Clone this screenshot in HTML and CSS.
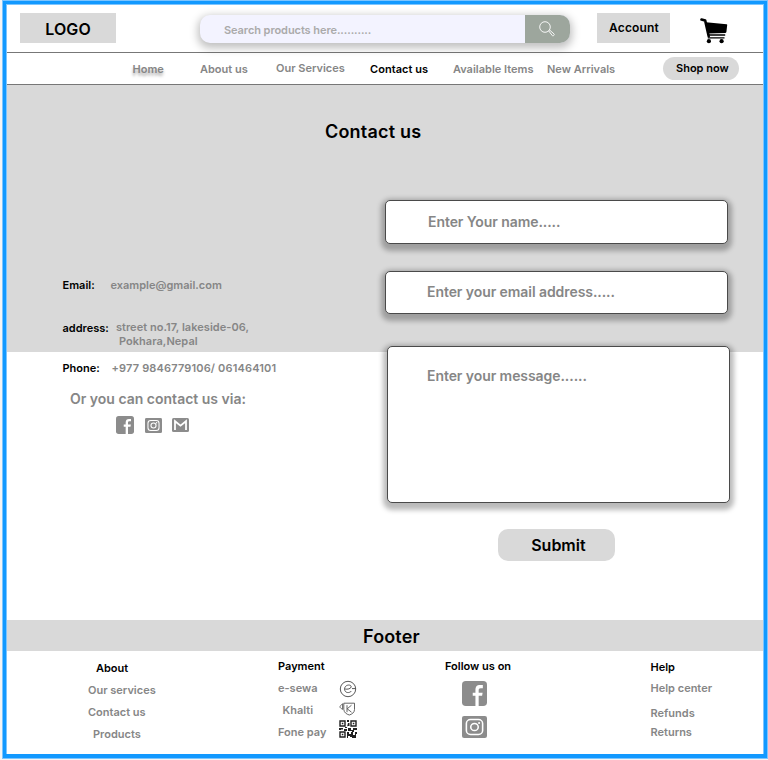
FILE: index.html
```html
<!DOCTYPE html>
<html lang="en">
<head>
<meta charset="utf-8">
<title>Contact us</title>
<link rel="stylesheet" href="styles.css">
</head>
<body>
<svg class="defs" aria-hidden="true">
  <symbol id="facebook" viewBox="0 0 24 24">
    <rect width="24" height="24" rx="3.6" fill="#8c8c8c"/>
    <path d="M12.9 24V14.2H10.3V11.2H12.9V8.6C12.9 5.2 14.6 3.9 17.2 3.9H20V7H18C16.4 7 16 7.7 16 9V11.2H19.8L19.3 14.2H16V24Z" fill="#fff"/>
  </symbol>
  <symbol id="instagram" viewBox="0 0 24 22" preserveAspectRatio="none">
    <rect width="24" height="22" rx="2" fill="#8c8c8c"/>
    <rect x="4.2" y="3.6" width="15.6" height="14.8" rx="4" fill="none" stroke="#fff" stroke-width="1.5"/>
    <circle cx="12" cy="11" r="3.6" fill="none" stroke="#fff" stroke-width="1.5"/>
    <circle cx="16.4" cy="6.9" r="1" fill="#fff"/>
  </symbol>
</svg>
<div class="frame">
  <div class="page">
    <header class="top">
      <div class="logo">LOGO</div>
      <div class="search">
        <span class="search-text">Search products here..........</span>
        <span class="search-btn">
          <svg width="18" height="18" viewBox="0 0 18 18" fill="none" stroke="#fff" stroke-width=".9"><circle cx="7" cy="7" r="5.3"/><path d="M10.7 10.9l.9-.9 4.4 3.9c.9.9-.8 2.6-1.7 1.7z"/></svg>
        </span>
      </div>
      <div class="account">Account</div>
      <svg class="cart" width="28" height="28" viewBox="0 0 28 28"><path d="M1.5 2.5L5.2 3.6L8.7 19.2" fill="none" stroke="#000" stroke-width="2.6" stroke-linecap="round" stroke-linejoin="round"/><path d="M6 5.2L26.6 7.2Q27.3 7.3 27.2 8L26.4 15Q26.3 15.8 25.4 15.9L8.2 16.6Z"/><path d="M8 18H25.2M7.8 20.8H24.5" fill="none" stroke="#000" stroke-width="1.3"/><circle cx="8.9" cy="24.2" r="2.1"/><circle cx="21.6" cy="24.2" r="2.1"/></svg>
    </header>
    <nav class="nav">
      <a class="home">Home</a>
      <a>About us</a>
      <a class="services">Our Services</a>
      <a class="current">Contact us</a>
      <a>Available Items</a>
      <a>New Arrivals</a>
      <a class="shop">Shop now</a>
    </nav>
    <main class="main">
      <h1>Contact us</h1>
      <div class="columns">
        <section class="info">
          <dl>
            <dt>Email:</dt><dd class="email">example@gmail.com</dd>
            <dt>address:</dt><dd class="address">street no.17, lakeside-06,<br><span class="city">Pokhara,Nepal</span></dd>
            <dt>Phone:</dt><dd class="phone">+977 9846779106/ 061464101</dd>
          </dl>
          <p class="via">Or you can contact us via:</p>
          <div class="social">
            <svg width="18" height="18"><use href="#facebook"/></svg>
            <svg width="17" height="15"><use href="#instagram"/></svg>
            <svg width="17" height="14" viewBox="0 0 17 14"><rect width="17" height="14" rx="1.5" fill="#8c8c8c"/><path d="M3 12V3.2L8.5 7.6L14 3.2V12" fill="none" stroke="#fff" stroke-width="1.8"/></svg>
          </div>
        </section>
        <form class="form">
          <div class="field name">Enter Your name.....</div>
          <div class="field mail">Enter your email address.....</div>
          <div class="field message">Enter your message......</div>
          <div class="submit">Submit</div>
        </form>
      </div>
    </main>
    <footer>
      <h2>Footer</h2>
      <div class="links">
        <ul class="about"><li class="title">About</li><li>Our services</li><li>Contact us</li><li class="products">Products</li></ul>
        <ul class="payment">
          <li class="title">Payment</li>
          <li>e-sewa</li>
          <li class="khalti">Khalti</li>
          <li>Fone pay</li>
        </ul>
        <div class="pay-icons">
          <svg width="18" height="18" viewBox="0 0 18 18" fill="none" stroke="#444" stroke-width=".9"><circle cx="9" cy="9" r="7.7"/><path d="M13 8.6H16.4M6.2 9C8 9.6 12.2 8.8 12.2 6.8C12.2 4 5.6 4.4 5.6 9C5.6 13.4 10.8 13.3 12.4 11"/></svg>
          <svg width="18" height="14" viewBox="0 0 18 14" fill="none" stroke="#555" stroke-width=".9"><path d="M4.8 1.2H15.5V7.5C15.5 10.5 13 12.2 10.3 13C7.5 12.2 5 10.5 4.8 7.5ZM8 3.2V10.2M12.5 3.2L8.2 6.8L12.5 10.2M3.6 1.8C2 3 1 4 1 4.8C1 6 2.2 6.4 3.6 7.4V1.8"/></svg>
          <svg width="18" height="18" viewBox="0 0 18 18"><path d="M1 1h5v5H1zM12 1h5v5H12zM1 12h5v5H1z" fill="none" stroke="#222" stroke-width="1.4"/><path d="M2.8 2.8h1.5v1.5H2.8zM13.8 2.8h1.5v1.5h-1.5zM2.8 13.8h1.5v1.5H2.8zM8 0h2v2H8zM9 3h1.5v3H8v2H6V7H8zM0 8h4v1.5H2V10H0zM5 9h3v2H5zM9 8h3v2h2V8h4v2h-3v2h-2v-1H9zM8 12h2v2h2v2H9v2H8zM12 12h2v3h2v-3h2v2h-1v4h-4v-1h-2v-1h1z" fill="#222"/></svg>
        </div>
        <div class="follow">
          <div class="title">Follow us on</div>
          <svg width="25" height="25"><use href="#facebook"/></svg>
          <svg class="insta" width="25" height="22"><use href="#instagram"/></svg>
        </div>
        <ul class="help"><li class="title">Help</li><li>Help center</li><li class="refunds">Refunds</li><li class="returns">Returns</li></ul>
      </div>
    </footer>
  </div>
</div>
</body>
</html>
```

FILE: styles.css
```css
* { box-sizing: border-box; margin: 0; padding: 0; }
body {
  height: 760px;
  padding: 1px 1px 2px 3px;
  overflow: hidden;
  background: #f5f5f5;
  font-family: Inter, "Liberation Sans", sans-serif;
  font-size: 11px;
  font-weight: 600;
  line-height: 14px;
  color: #868686;
  white-space: nowrap;
}
.defs { position: absolute; width: 0; height: 0; }
svg { display: block; flex: none; }
ul { list-style: none; }
.frame {
  height: 757px;
  border: 3px solid #1299ff;
  border-bottom-width: 4px;
  box-shadow: 0 0 0 1px #7cc5ff;
  background: #7cc5ff;
  padding: 1px 1px 0;
}
.page { height: 749px; background: #fff; }

.top { display: flex; height: 48px; padding-left: 13px; border-bottom: 1px solid #777; }
.logo, .account { background: #d9d9d9; color: #000; text-align: center; }
.logo { width: 96px; height: 30px; margin-top: 8.4px; line-height: 33px; font-size: 16px; letter-spacing: .1px; }
.search {
  display: flex;
  width: 370px;
  height: 28px;
  margin: 10.4px 0 0 83.6px;
  border-radius: 10px;
  background: #f3f3ff;
  box-shadow: 0 3px 9px 2px rgba(0, 0, 0, .25);
  overflow: hidden;
}
.search-text { flex: 1; padding-left: 24.4px; line-height: 30px; color: #aaa; letter-spacing: -.07px; }
.search-btn { width: 44.5px; padding: 5px 0 0 13px; background: #9da69d; }
.account { width: 73px; height: 30px; margin: 8px 0 0 27.4px; padding-left: 1px; line-height: 29px; font-size: 12px; letter-spacing: .15px; }
.cart { margin: 12px 0 0 30.5px; }

.nav {
  display: grid;
  grid-template-columns: 67.5px 76px 94px 83px 94px 116px 75.5px;
  height: 32px;
  padding: 9px 0 0 125.5px;
  border-bottom: 1px solid #777;
}
.home { text-shadow: 0 3px 3px rgba(0, 0, 0, .35); }
.services { margin-top: -1px; }
.current { color: #000; letter-spacing: .05px; }
.shop { height: 23px; margin-top: -5px; padding-left: 13px; border-radius: 12px; background: #d9d9d9; color: #000; line-height: 23px; }

.main { height: 535px; background: linear-gradient(#d9d9d9 267px, #fff 267px); }
h1 { padding: 35px 0 0 318px; font-size: 18px; line-height: 24px; font-weight: 600; color: #000; letter-spacing: .2px; }
.columns { display: grid; grid-template-columns: 378px 345px; }
.info { padding: 134px 0 0 55.5px; }
dl { display: grid; grid-template-columns: 48px auto; }
dt { color: #000; }
.email { height: 43px; }
.address { height: 40px; padding-left: 5.4px; line-height: 13.5px; letter-spacing: .05px; }
.city { padding-left: 3px; }
.phone { padding-left: 1px; letter-spacing: .15px; }
.via { margin: 15px 0 0 7.5px; font-size: 14px; line-height: 18px; }
.social { display: flex; align-items: center; gap: 11px; margin: 8.4px 0 0 53.5px; }
.social svg:nth-child(3) { margin-left: -1.5px; }

.form { padding-top: 56.4px; }
.field {
  width: 342.5px;
  height: 43px;
  border: 1px solid #4a4a4a;
  border-radius: 5px;
  background: #fff;
  box-shadow: 0 3px 5px 4px rgba(0, 0, 0, .27);
  font-size: 14px;
  line-height: 41px;
  letter-spacing: -.07px;
}
.name { height: 43.6px; padding-left: 42px; }
.mail { margin-top: 27px; padding-left: 41px; line-height: 39px; }
.message { height: 157px; margin: 32px 0 0 2px; padding: 18px 0 0 39px; line-height: 21px; }
.submit { width: 117px; height: 32px; margin: 26px 0 0 113.4px; padding-left: 3px; border-radius: 10px; background: #d9d9d9; color: #000; font-size: 16px; line-height: 33px; text-align: center; }

h2 { height: 31px; padding-left: 356px; background: #d9d9d9; color: #000; font-size: 18px; line-height: 33px; font-weight: 600; letter-spacing: .15px; }
.links { display: grid; grid-template-columns: 190px 60.5px 106.5px 205px 110px; padding-left: 81px; }
.title { color: #000; }
.about { padding-top: 10px; }
.about li { height: 22px; }
.about .title { padding-left: 8px; }
.products { padding-left: 5px; }
.payment { padding-top: 8px; }
.payment li { height: 22px; }
.khalti { padding-left: 4.5px; }
.pay-icons { padding-top: 29px; }
.pay-icons svg { margin-bottom: 4px; }
.follow { padding-top: 8px; }
.follow svg { margin: 8px 0 0 17px; }
.follow .insta { margin-top: 10px; }
.help { padding: 9px 0 0 .5px; }
.help li { height: 21px; }
.refunds { margin-top: 4px; }
.help .returns { margin-top: -2px; }
```
